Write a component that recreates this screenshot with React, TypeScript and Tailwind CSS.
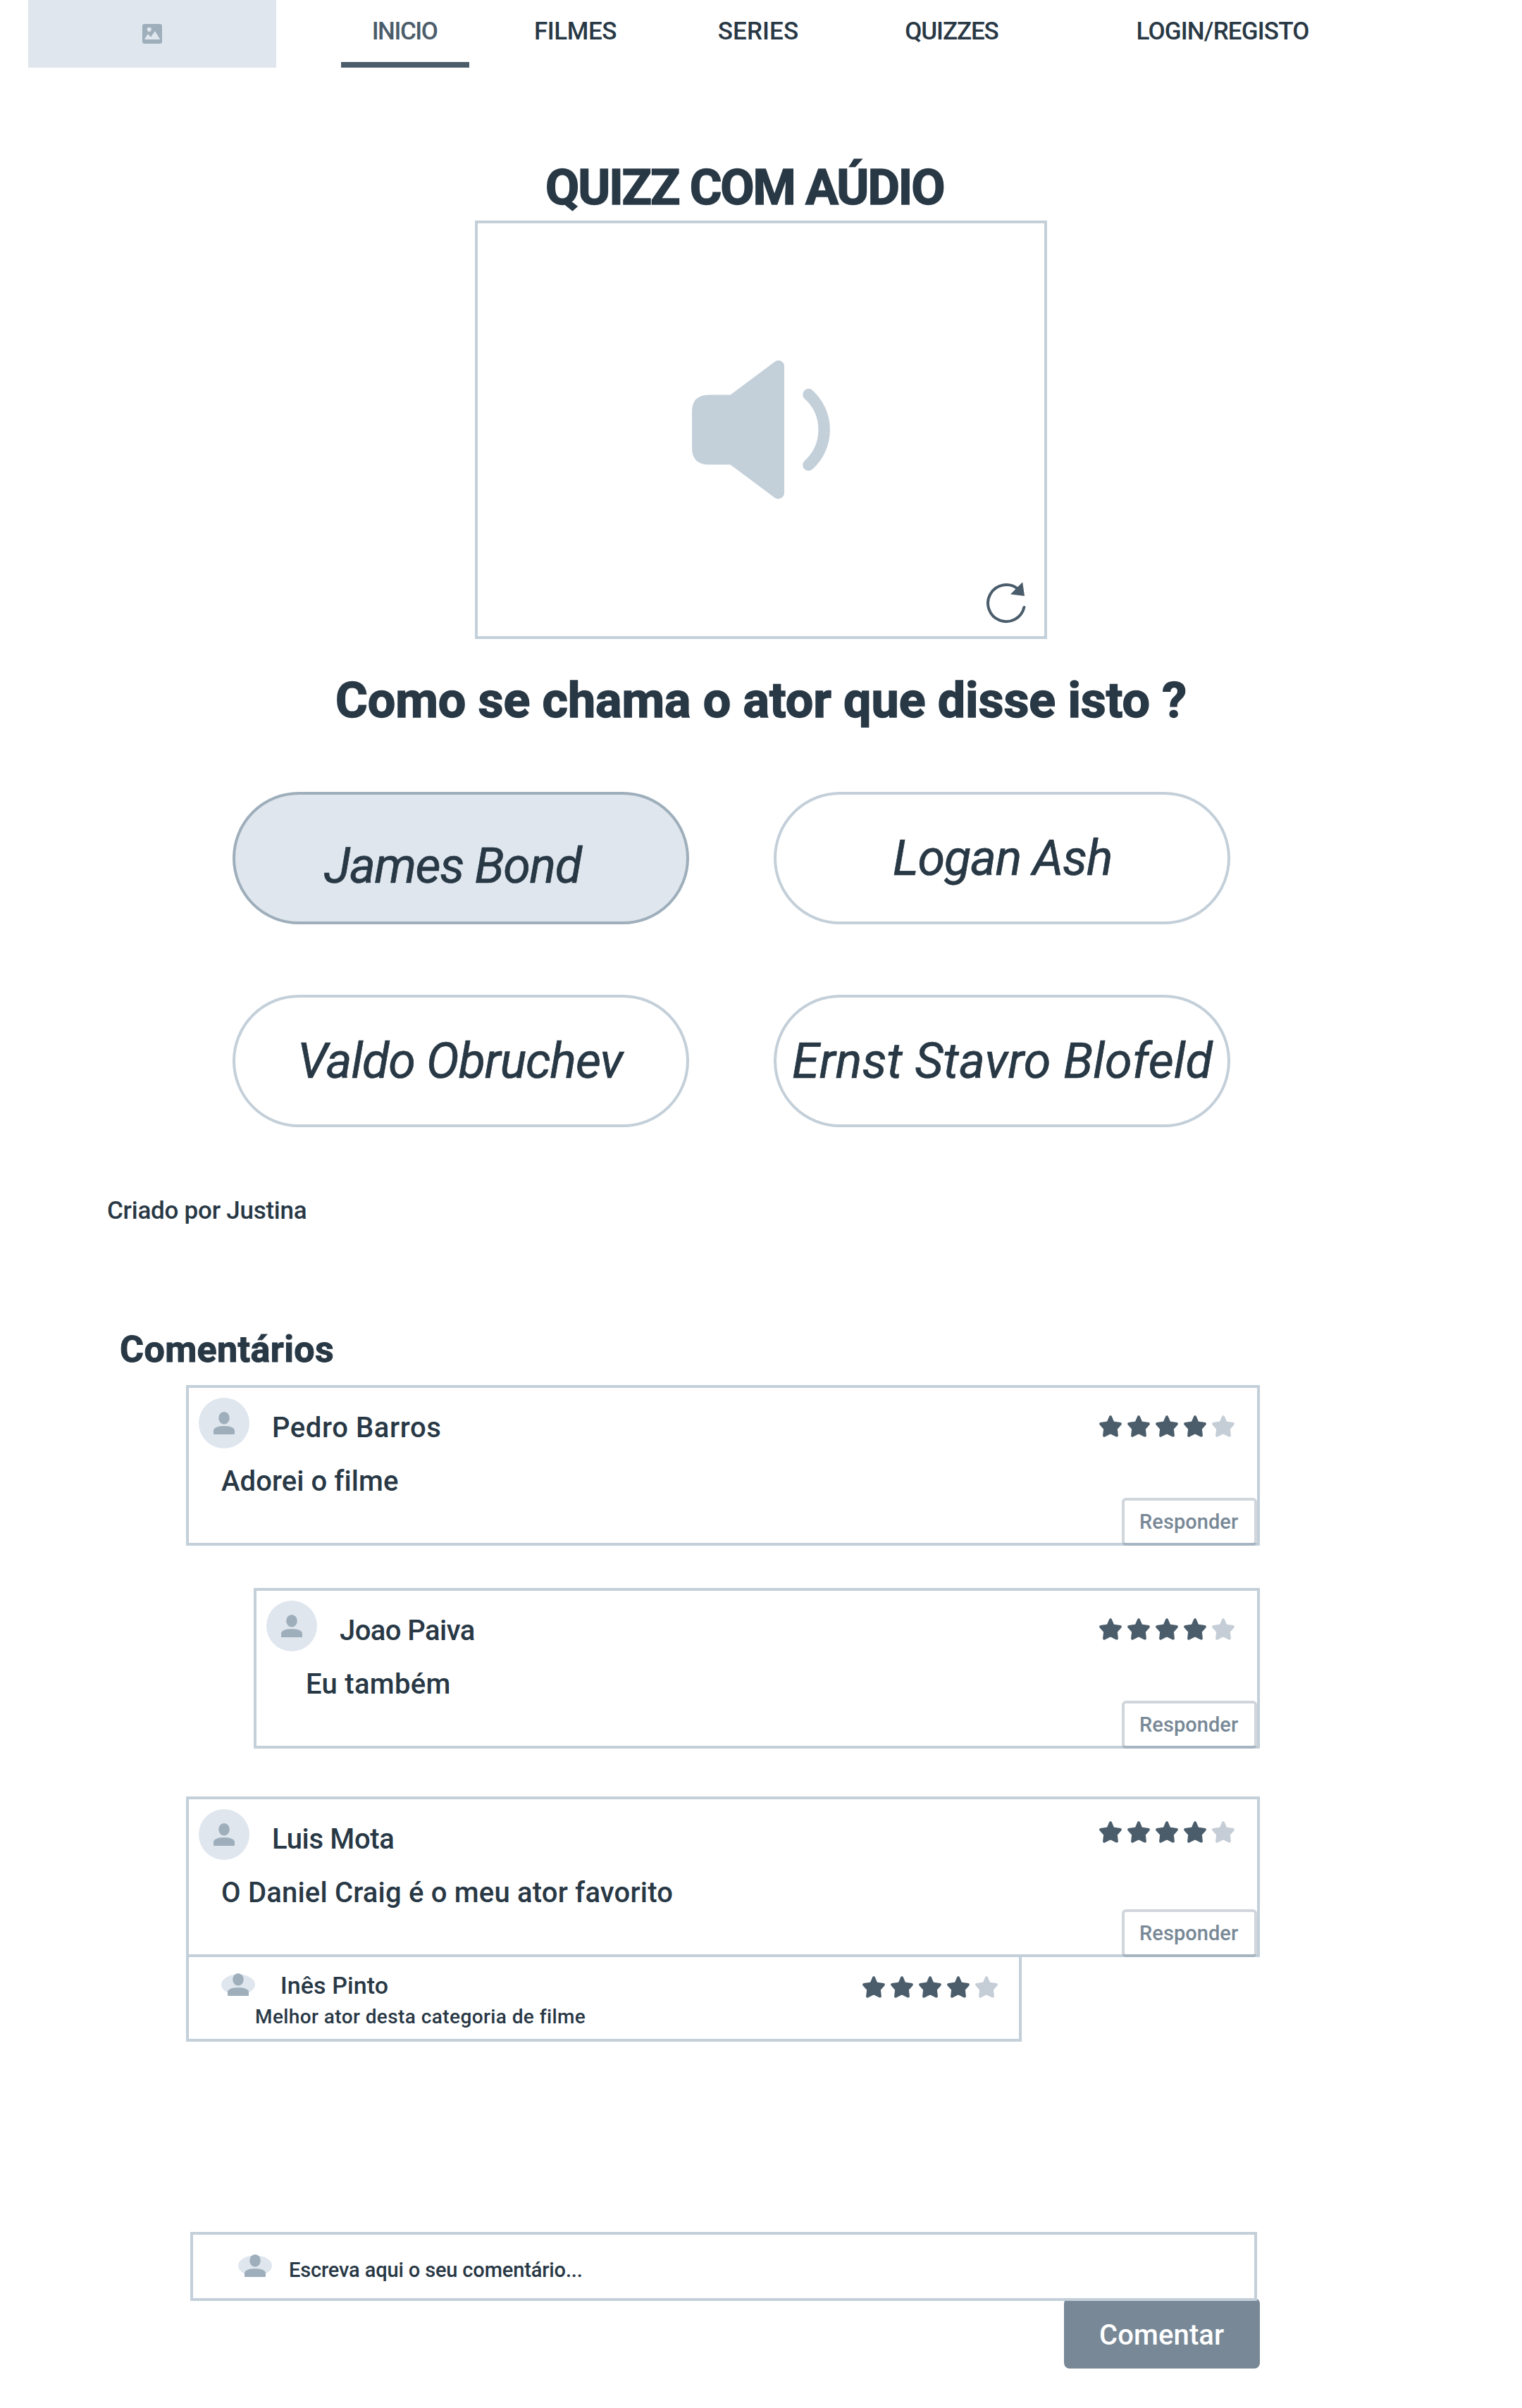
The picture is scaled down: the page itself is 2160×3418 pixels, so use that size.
import React from "react";

function Person() {
  return (
    <>
      <ellipse cx="15" cy="8.8" rx="7.8" ry="8.8" fill="#9eaebb" />
      <path d="M0 31V27C0 22 7 20.3 15 20.3S30 22 30 27V31Q30 32 29 32H1Q0 32 0 31Z" fill="#9eaebb" />
    </>
  );
}

function Avatar() {
  return (
    <svg className="block h-[72px] w-[72px] shrink-0" viewBox="0 0 72 72">
      <circle cx="36" cy="36" r="36" fill="#dfe6ee" />
      <g transform="translate(21 20)">
        <Person />
      </g>
    </svg>
  );
}

function SmallAvatar() {
  return (
    <svg className="block h-8 w-12 shrink-0" viewBox="0 0 48 32">
      <ellipse cx="24" cy="16" rx="24" ry="14.6" fill="#dfe6ee" />
      <g transform="translate(9 0)">
        <Person />
      </g>
    </svg>
  );
}

function Stars({ value }: { value: number }) {
  return (
    <div className="flex gap-2">
      {[1, 2, 3, 4, 5].map((n) => (
        <svg
          key={n}
          className={n <= value ? "block h-8 w-8 text-[#4b5d6b]" : "block h-8 w-8 text-[#c5cdd6]"}
          viewBox="0 0 32 32"
          fill="currentColor"
          stroke="currentColor"
          strokeWidth="4"
          strokeLinejoin="round"
        >
          <path d="M16 2.2L19.5 10.6L29.8 12.1L23.8 18.8L24.9 28.6L16 24.3L7.1 28.6L8.2 18.8L2.2 12.1L12.5 10.6Z" />
        </svg>
      ))}
    </div>
  );
}

type CommentProps = {
  name: string;
  nameClass: string;
  text: string;
  textClass: string;
  boxClass: string;
  starsClass: string;
};

function Comment({ name, nameClass, text, textClass, boxClass, starsClass }: CommentProps) {
  return (
    <article className={`relative h-[228px] border-4 border-[#c3cfd9] ${boxClass}`}>
      <div className="flex items-start pt-[14px] pl-[14px] pr-8">
        <Avatar />
        <h3 className={`mt-[23px] ml-8 text-[40px] leading-none font-medium ${nameClass}`}>{name}</h3>
        <div className={`ml-auto ${starsClass}`}>
          <Stars value={4} />
        </div>
      </div>
      <p className={`mt-[27px] text-[40px] leading-none font-medium ${textClass}`}>{text}</p>
      <button className="absolute right-0 -bottom-1 flex h-[68px] w-48 items-start rounded-md border-4 border-[#66788c]/30 pt-[16px] pl-[21px] text-[29px] leading-none font-medium tracking-[0.06px] text-[#788896]">
        Responder
      </button>
    </article>
  );
}

const answers = [
  { label: "James Bond", box: "border-[#9eaebb] bg-[#dfe6ee] pt-[66px] pl-[126px]", text: "tracking-[-1.45px]" },
  { label: "Logan Ash", box: "border-[#c3cfd9] pt-[55px] pl-[165px]", text: "tracking-[-1.18px]" },
  { label: "Valdo Obruchev", box: "border-[#c3cfd9] pt-[55px] pl-[88px]", text: "tracking-[-1.05px]" },
  { label: "Ernst Stavro Blofeld", box: "border-[#c3cfd9] pt-[55px] pl-[22px]", text: "tracking-[0.1px]" },
];

const tabs = [
  { label: "FILMES", width: "w-[301px]", text: "tracking-[-0.43px]" },
  { label: "SERIES", width: "w-[218px]", text: "tracking-[0.12px]" },
  { label: "QUIZZES", width: "w-[331px]", text: "tracking-[-1.09px]" },
  { label: "LOGIN/REGISTO", width: "w-[438px]", text: "tracking-[-0.85px]" },
];

export default function App() {
  return (
    <div className="h-[3418px] w-[2160px] overflow-hidden bg-white font-['Roboto',sans-serif] whitespace-nowrap text-[#283845]">
      <header className="flex h-24 pl-10">
        <div className="flex h-24 w-[352px] items-center justify-center bg-[#dfe6ee]">
          <svg className="block h-7 w-7" viewBox="0 0 28 28">
            <rect width="28" height="28" rx="3" fill="#9eaebb" />
            <circle cx="9.8" cy="7.8" r="3.1" fill="#dfe6ee" />
            <path d="M3 22L7.6 14.3L12.2 18.6L17.9 10L25.3 22Z" fill="#dfe6ee" />
          </svg>
        </div>
        <nav className="ml-[92px] flex text-[35px] leading-none font-medium">
          <a className="flex h-24 w-[182px] justify-center border-b-8 border-[#4b5d6b] pt-[27px] pr-0.5 tracking-[-1.48px] text-[#4b5d6b]">
            INICIO
          </a>
          {tabs.map((t) => (
            <a key={t.label} className={`flex justify-center pt-[27px] ${t.width} ${t.text}`}>
              {t.label}
            </a>
          ))}
        </nav>
      </header>

      <main>
        <h1 className="mt-[135px] ml-[774px] text-[70px] leading-none font-bold tracking-[-2.1px] [-webkit-text-stroke:1.5px_#283845]">
          QUIZZ COM AÚDIO
        </h1>

        <section className="relative mt-3 ml-[674px] flex h-[594px] w-[812px] items-center justify-center border-4 border-[#c3cfd9]">
          <svg className="block h-[198px] w-[198px]" viewBox="981 511 198 198">
            <path
              d="M1006 560.5H1036.5L1099.5 513.5Q1105 509.5 1110 513.5Q1113 516 1113 520V699.5Q1113 703.5 1110 706Q1105 710 1099.5 706.5L1036.5 659.5H1006Q982 659.5 982 635.5V584.5Q982 560.5 1006 560.5Z"
              fill="#c3cfd9"
            />
            <path d="M1147.5 560A67.5 67.5 0 0 1 1147.5 660" fill="none" stroke="#c3cfd9" strokeWidth="16.5" strokeLinecap="round" />
          </svg>
          <svg className="absolute right-[22px] bottom-[17px] block h-[62px] w-[62px]" viewBox="1398 824 62 62">
            <path d="M1444.5 836A26 26 0 1 0 1453.4 862" fill="none" stroke="#4b5d6b" strokeWidth="4" strokeLinecap="round" />
            <path d="M1451.2 826.2L1454 846L1434 843.6Z" fill="#4b5d6b" />
          </svg>
        </section>

        <h2 className="mt-[52px] ml-[476px] text-[70px] leading-none font-bold tracking-[-0.06px] [-webkit-text-stroke:1.5px_#283845]">
          Como se chama o ator que disse isto ?
        </h2>

        <section className="mt-[95px] ml-[330px] grid w-[1416px] grid-cols-[648px_648px] gap-x-[120px] gap-y-[100px]">
          {answers.map((a) => (
            <button
              key={a.label}
              className={`flex h-[188px] items-start rounded-full border-4 text-[70px] leading-none italic [-webkit-text-stroke:0.7px_#283845] ${a.box} ${a.text}`}
            >
              {a.label}
            </button>
          ))}
        </section>

        <p className="mt-[101px] ml-[152px] text-[35px] leading-none font-medium tracking-[-0.24px]">Criado por Justina</p>

        <h2 className="mt-[154px] ml-[170px] text-[52px] leading-none font-bold tracking-[0.38px] [-webkit-text-stroke:1px_#283845]">
          Comentários
        </h2>

        <section className="mt-6 ml-[264px] w-[1524px]">
          <Comment
            name="Pedro Barros"
            nameClass="tracking-[0.58px]"
            text="Adorei o filme"
            textClass="ml-[46px] tracking-[0.07px]"
            boxClass="w-full"
            starsClass="mt-[25px]"
          />
          <Comment
            name="Joao Paiva"
            nameClass="tracking-[-0.56px]"
            text="Eu também"
            textClass="ml-[70px] tracking-[0.29px]"
            boxClass="mt-[60px] ml-24"
            starsClass="mt-[25px]"
          />
          <Comment
            name="Luis Mota"
            nameClass="tracking-[-0.33px]"
            text="O Daniel Craig é o meu ator favorito"
            textClass="ml-[46px] tracking-[0.19px]"
            boxClass="mt-[68px]"
            starsClass="mt-[17px]"
          />
          <article className="flex h-[120px] w-[1186px] items-start border-4 border-t-0 border-[#c3cfd9] pr-[30px] pl-[46px]">
            <div className="mt-[23px]">
              <SmallAvatar />
            </div>
            <div>
              <h3 className="mt-[23px] ml-9 text-[34px] leading-none font-medium tracking-[0.09px]">Inês Pinto</h3>
              <p className="mt-[14px] text-[28px] leading-none font-medium tracking-[0.41px]">
                Melhor ator desta categoria de filme
              </p>
            </div>
            <div className="mt-[27px] ml-auto">
              <Stars value={4} />
            </div>
          </article>
        </section>

        <form className="mt-[270px] ml-[270px] flex w-[1518px] flex-col">
          <label className="relative z-10 flex h-[98px] w-[1514px] items-start border-4 border-[#c3cfd9] bg-white pl-16">
            <div className="mt-[28px]">
              <SmallAvatar />
            </div>
            <span className="mt-[36px] ml-6 text-[29px] leading-none font-medium tracking-[-0.14px]">
              Escreva aqui o seu comentário...
            </span>
          </label>
          <button
            type="button"
            className="-mt-1 flex h-[100px] w-[278px] items-start self-end rounded-lg bg-[#788896] pt-[33px] pl-[50px] text-[40px] leading-none font-medium tracking-[0.11px] text-white"
          >
            Comentar
          </button>
        </form>
      </main>
    </div>
  );
}
